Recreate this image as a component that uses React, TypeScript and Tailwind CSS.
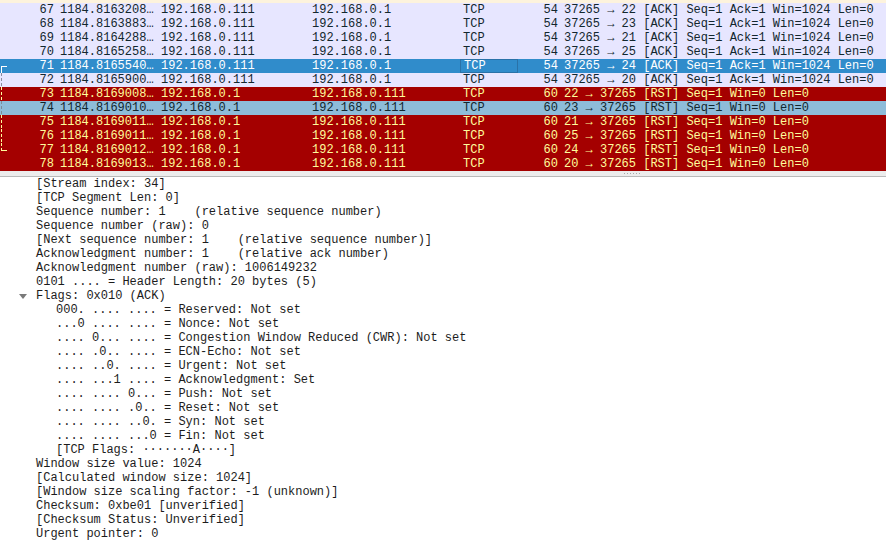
import React from "react";

type Kind = "ack" | "rst" | "selected" | "related";

interface Packet {
  no: number;
  time: string;
  src: string;
  dst: string;
  len: number;
  info: string;
  kind: Kind;
  bracket?: "start" | "mid" | "end";
}

const packets: Packet[] = [
  { no: 67, time: "1184.8163208…", src: "192.168.0.111", dst: "192.168.0.1", len: 54, info: "37265 → 22 [ACK] Seq=1 Ack=1 Win=1024 Len=0", kind: "ack" },
  { no: 68, time: "1184.8163883…", src: "192.168.0.111", dst: "192.168.0.1", len: 54, info: "37265 → 23 [ACK] Seq=1 Ack=1 Win=1024 Len=0", kind: "ack" },
  { no: 69, time: "1184.8164288…", src: "192.168.0.111", dst: "192.168.0.1", len: 54, info: "37265 → 21 [ACK] Seq=1 Ack=1 Win=1024 Len=0", kind: "ack" },
  { no: 70, time: "1184.8165258…", src: "192.168.0.111", dst: "192.168.0.1", len: 54, info: "37265 → 25 [ACK] Seq=1 Ack=1 Win=1024 Len=0", kind: "ack" },
  { no: 71, time: "1184.8165540…", src: "192.168.0.111", dst: "192.168.0.1", len: 54, info: "37265 → 24 [ACK] Seq=1 Ack=1 Win=1024 Len=0", kind: "selected", bracket: "start" },
  { no: 72, time: "1184.8165900…", src: "192.168.0.111", dst: "192.168.0.1", len: 54, info: "37265 → 20 [ACK] Seq=1 Ack=1 Win=1024 Len=0", kind: "ack", bracket: "mid" },
  { no: 73, time: "1184.8169008…", src: "192.168.0.1", dst: "192.168.0.111", len: 60, info: "22 → 37265 [RST] Seq=1 Win=0 Len=0", kind: "rst", bracket: "mid" },
  { no: 74, time: "1184.8169010…", src: "192.168.0.1", dst: "192.168.0.111", len: 60, info: "23 → 37265 [RST] Seq=1 Win=0 Len=0", kind: "related", bracket: "mid" },
  { no: 75, time: "1184.8169011…", src: "192.168.0.1", dst: "192.168.0.111", len: 60, info: "21 → 37265 [RST] Seq=1 Win=0 Len=0", kind: "rst", bracket: "mid" },
  { no: 76, time: "1184.8169011…", src: "192.168.0.1", dst: "192.168.0.111", len: 60, info: "25 → 37265 [RST] Seq=1 Win=0 Len=0", kind: "rst", bracket: "mid" },
  { no: 77, time: "1184.8169012…", src: "192.168.0.1", dst: "192.168.0.111", len: 60, info: "24 → 37265 [RST] Seq=1 Win=0 Len=0", kind: "rst", bracket: "end" },
  { no: 78, time: "1184.8169013…", src: "192.168.0.1", dst: "192.168.0.111", len: 60, info: "20 → 37265 [RST] Seq=1 Win=0 Len=0", kind: "rst" },
];

const rowStyles: Record<Kind, string> = {
  ack: "bg-[#e7e6ff] text-[#12272e]",
  rst: "bg-[#a40000] text-[#fffc9c]",
  selected: "bg-[#308ccb] text-white",
  related: "bg-[#8ebcd9] text-[#12272e]",
};

const bracketColor: Record<Kind, string> = {
  ack: "#8c8c9c",
  rst: "#fffc9c",
  selected: "#ffffff",
  related: "#7d8a96",
};

function Bracket({ type, kind }: { type: "start" | "mid" | "end"; kind: Kind }) {
  const c = bracketColor[kind];
  const dash = kind === "selected" ? undefined : "3 2";
  return (
    <svg width="8" height="14" viewBox="0 0 8 14" className="absolute left-0 top-0">
      {type === "start" && (
        <>
          <line x1="1" y1="7.5" x2="7" y2="7.5" stroke={c} strokeWidth="1" />
          <line x1="1.5" y1="7" x2="1.5" y2="14" stroke={c} strokeWidth="1" />
        </>
      )}
      {type === "mid" && <line x1="1.5" y1="0" x2="1.5" y2="14" stroke={c} strokeWidth="1" strokeDasharray={dash} />}
      {type === "end" && (
        <>
          <line x1="1.5" y1="0" x2="1.5" y2="7" stroke={c} strokeWidth="1" strokeDasharray="3 2" />
          <line x1="1" y1="7.5" x2="7" y2="7.5" stroke={c} strokeWidth="1" />
        </>
      )}
    </svg>
  );
}

interface Detail {
  text: string;
  level: 1 | 2;
  expander?: boolean;
}

const details: Detail[] = [
  { text: "[Stream index: 34]", level: 1 },
  { text: "[TCP Segment Len: 0]", level: 1 },
  { text: "Sequence number: 1    (relative sequence number)", level: 1 },
  { text: "Sequence number (raw): 0", level: 1 },
  { text: "[Next sequence number: 1    (relative sequence number)]", level: 1 },
  { text: "Acknowledgment number: 1    (relative ack number)", level: 1 },
  { text: "Acknowledgment number (raw): 1006149232", level: 1 },
  { text: "0101 .... = Header Length: 20 bytes (5)", level: 1 },
  { text: "Flags: 0x010 (ACK)", level: 1, expander: true },
  { text: "000. .... .... = Reserved: Not set", level: 2 },
  { text: "...0 .... .... = Nonce: Not set", level: 2 },
  { text: ".... 0... .... = Congestion Window Reduced (CWR): Not set", level: 2 },
  { text: ".... .0.. .... = ECN-Echo: Not set", level: 2 },
  { text: ".... ..0. .... = Urgent: Not set", level: 2 },
  { text: ".... ...1 .... = Acknowledgment: Set", level: 2 },
  { text: ".... .... 0... = Push: Not set", level: 2 },
  { text: ".... .... .0.. = Reset: Not set", level: 2 },
  { text: ".... .... ..0. = Syn: Not set", level: 2 },
  { text: ".... .... ...0 = Fin: Not set", level: 2 },
  { text: "[TCP Flags: ·······A····]", level: 2 },
  { text: "Window size value: 1024", level: 1 },
  { text: "[Calculated window size: 1024]", level: 1 },
  { text: "[Window size scaling factor: -1 (unknown)]", level: 1 },
  { text: "Checksum: 0xbe01 [unverified]", level: 1 },
  { text: "[Checksum Status: Unverified]", level: 1 },
  { text: "Urgent pointer: 0", level: 1 },
];

export default function App() {
  return (
    <div
      className="w-[886px] h-[541px] overflow-hidden bg-white text-[12px] leading-[14px]"
      style={{ fontFamily: '"Liberation Mono", "DejaVu Sans Mono", monospace' }}
    >
      {/* packet list */}
      <div className="h-[3px] bg-[#fdf3dd]" />
      {packets.map((p) => (
        <div key={p.no} className={`flex h-[14px] whitespace-pre ${rowStyles[p.kind]}`}>
          <div className="relative w-[57px] shrink-0 pr-[3px] text-right">
            {p.bracket && <Bracket type={p.bracket} kind={p.kind} />}
            {p.no}
          </div>
          <div className="w-[101px] shrink-0 pl-[3px]">{p.time}</div>
          <div className="w-[151px] shrink-0 pl-[3px]">{p.src}</div>
          <div className="w-[151px] shrink-0 pl-[3px]">{p.dst}</div>
          <div
            className={`w-[58px] shrink-0 pl-[3px] ${
              p.kind === "selected" ? "border border-[#2a72a8] pl-[2px] leading-[12px]" : ""
            }`}
          >
            TCP
          </div>
          <div className="w-[43px] shrink-0 pr-[3px] text-right">{p.len}</div>
          <div className="flex-1 pl-[3px]">{p.info}</div>
        </div>
      ))}

      {/* splitter */}
      <div className="relative h-[6px] bg-[#ececec] border-b border-[#b9b9b9]">
        <div className="absolute left-[624px] top-[2px] flex gap-[2px]">
          {[0, 1, 2, 3, 4, 5].map((i) => (
            <span key={i} className="h-px w-px bg-[#a8a8a8]" />
          ))}
        </div>
      </div>

      {/* packet details */}
      <div className="text-[#1c1c1c]">
        {details.map((d, i) => (
          <div
            key={i}
            className={`relative h-[14px] whitespace-pre ${d.level === 1 ? "pl-[36px]" : "pl-[56px]"}`}
          >
            {d.expander && (
              <svg width="8" height="5" viewBox="0 0 8 5" className="absolute left-[19px] top-[5px]">
                <path d="M0 0 L8 0 L4 5 Z" fill="#7a7a7a" />
              </svg>
            )}
            {d.text}
          </div>
        ))}
      </div>
    </div>
  );
}
